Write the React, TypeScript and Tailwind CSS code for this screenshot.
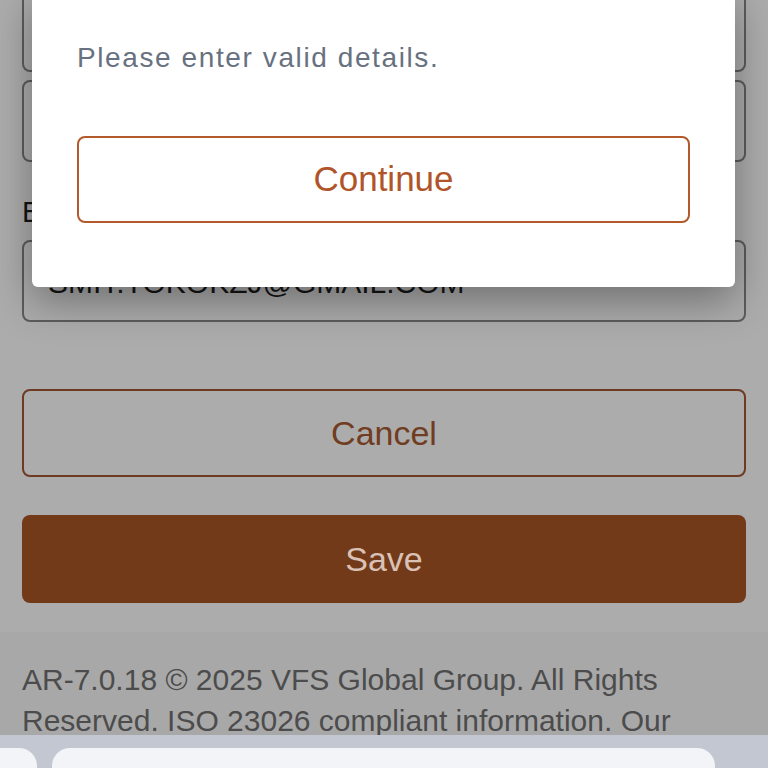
import React from "react";

const font = { fontFamily: '"Liberation Sans", Arial, sans-serif' };

function Field({ value, className = "" }: { value?: string; className?: string }) {
  return (
    <div
      className={`flex h-[82px] items-center rounded-lg border-2 border-[#5c5c5c] px-[24px] pt-[2px] text-[30px] uppercase text-[#141414] ${className}`}
    >
      {value}
    </div>
  );
}

export default function App() {
  return (
    <div style={font} className="relative h-[768px] w-[768px] overflow-hidden bg-[#acacac]">
      <div className="flex h-[735px] flex-col overflow-hidden">
        {/* form behind the dialog */}
        <div className="flex flex-col px-[22px]">
          <Field className="mt-[-10px]" />
          <Field className="mt-[8px]" />
          <label className="mt-[30px] mb-[8px] text-[29px] leading-[40px] text-[#141414]">Email</label>
          <Field value="smit.tokokzj@gmail.com" />
          <button
            type="button"
            className="mt-[67px] h-[88px] rounded-lg border-2 border-[#6e3a22] text-[34px] text-[#703c22]"
          >
            Cancel
          </button>
          <button
            type="button"
            className="mt-[38px] h-[88px] rounded-lg bg-[#733a1a] text-[34px] text-[#d9c2b5]"
          >
            Save
          </button>
        </div>

        <footer className="mt-[29px] flex-1 bg-[#a8a8a8] px-[22px] pt-[27px]">
          <p className="text-[30px] leading-[41px] text-[#4c4c4c]">
            AR-7.0.18 © 2025 VFS Global Group. All Rights Reserved. ISO 23026 compliant information. Our
            privacy policy and terms of use apply.
          </p>
        </footer>
      </div>

      {/* browser toolbar */}
      <div className="flex h-[33px] items-end gap-[15px] bg-[#c3c7d1] pt-[13px]">
        <div className="ml-[-20px] h-[20px] w-[57px] rounded-t-[18px] bg-[#f2f4f7]" />
        <div className="h-[20px] w-[663px] rounded-t-[18px] bg-[#f2f4f7]" />
      </div>

      {/* dialog */}
      <div
        role="dialog"
        className="absolute left-[32px] top-[-10px] w-[703px] rounded-b-md bg-white px-[45px] pt-[50px] pb-[64px] shadow-[0_14px_40px_rgba(0,0,0,0.35)]"
      >
        <p className="text-[28px] leading-[36px] tracking-[1.6px] text-[#687180]">Please enter valid details.</p>
        <button
          type="button"
          className="mt-[60px] h-[87px] w-full rounded-lg border-2 border-[#b25a2c] bg-white text-[35px] text-[#b0552a]"
        >
          Continue
        </button>
      </div>
    </div>
  );
}
